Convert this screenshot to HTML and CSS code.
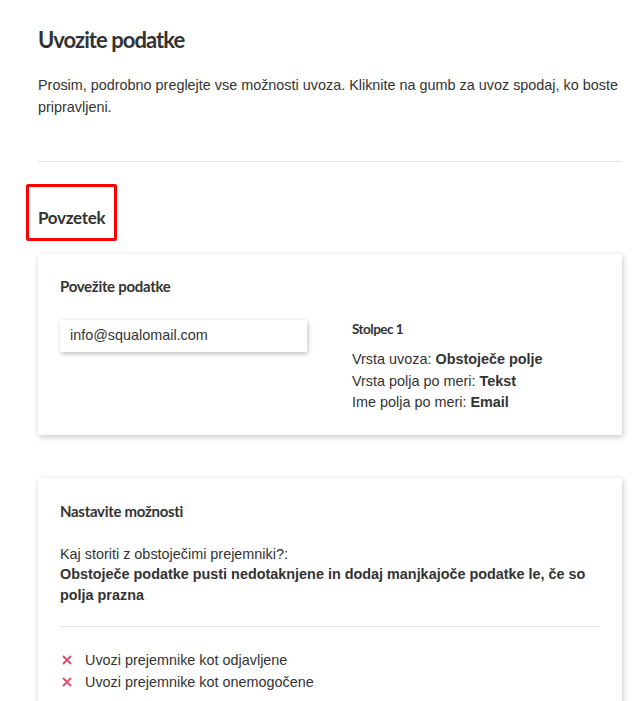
FILE: index.html
```html
<!DOCTYPE html>
<html lang="sl">

<head>
  <meta charset="UTF-8" />
  <meta name="viewport" content="width=device-width, initial-scale=1.0" />
  <title>Uvozite podatke</title>
  <link rel="stylesheet" href="styles.css">
</head>

<body>
  <div class="page">
    <h1 class="title">Uvozite podatke</h1>
    <p class="intro">Prosim, podrobno preglejte vse možnosti uvoza. Kliknite na gumb za uvoz spodaj, ko boste pripravljeni.</p>
    <hr class="divider">

    <div class="summary-head">
      <h2 class="subtitle">Povzetek</h2>
      <span class="highlight"></span>
    </div>

    <div class="card">
      <h3 class="card-title">Povežite podatke</h3>
      <div class="map-row">
        <div class="field">info@squalomail.com</div>
        <div class="column-info">
          <h4 class="column-title">Stolpec 1</h4>
          <div>Vrsta uvoza: <b>Obstoječe polje</b></div>
          <div>Vrsta polja po meri: <b>Tekst</b></div>
          <div>Ime polja po meri: <b>Email</b></div>
        </div>
      </div>
    </div>

    <div class="card card-options">
      <h3 class="card-title">Nastavite možnosti</h3>
      <div class="question">Kaj storiti z obstoječimi prejemniki?:</div>
      <div class="answer">Obstoječe podatke pusti nedotaknjene in dodaj manjkajoče podatke le, če so polja prazna</div>
      <hr class="card-divider">
      <ul class="options">
        <li>
          <svg class="cross" viewBox="0 0 10 10" width="10" height="10"><path d="M1 1L9 9M9 1L1 9" /></svg>
          Uvozi prejemnike kot odjavljene
        </li>
        <li>
          <svg class="cross" viewBox="0 0 10 10" width="10" height="10"><path d="M1 1L9 9M9 1L1 9" /></svg>
          Uvozi prejemnike kot onemogočene
        </li>
      </ul>
    </div>
  </div>
</body>

</html>
```

FILE: styles.css
```css
body {
  margin: 0;
  font-family: "Liberation Sans", Arial, sans-serif;
  font-size: 14.4px;
  color: #333;
  background: #fff;
}

.page {
  padding: 26px 22px 40px 38px;
}

.title,
.subtitle,
.card-title,
.column-title {
  font-family: "Lato", "Open Sans", sans-serif;
  font-weight: 700;
  color: #333;
  margin: 0;
  letter-spacing: -0.3px;
}

.title {
  font-size: 22px;
  line-height: 28px;
  letter-spacing: -0.95px;
}

.intro {
  margin: 20px 0 0;
  line-height: 22px;
}

.divider {
  border: none;
  border-top: 1px solid #e5e5e5;
  margin: 43px 0 0;
}

.summary-head {
  position: relative;
  margin-top: 44px;
}

.subtitle {
  font-size: 17px;
  line-height: 24px;
}

.highlight {
  position: absolute;
  left: -12px;
  top: -22px;
  width: 85px;
  height: 51px;
  border: 3px solid #f00;
  border-radius: 2px;
}

.card {
  margin-top: 24px;
  background: #fff;
  padding: 22px 22px 21px;
  box-shadow: 1px 2px 6px rgba(0, 0, 0, 0.22);
}

.card-title {
  font-size: 15px;
  line-height: 20px;
}

.map-row {
  display: flex;
  margin-top: 24px;
}

.field {
  width: 237px;
  height: 32px;
  line-height: 30px;
  padding: 0 0 0 10px;
  box-shadow: 1px 2px 5px rgba(0, 0, 0, 0.25);
  flex-shrink: 0;
}

.column-info {
  margin-left: 45px;
  line-height: 21.5px;
}

.column-title {
  font-size: 13.5px;
  line-height: 18px;
  margin-bottom: 11px;
  letter-spacing: -0.5px;
}

.card-options {
  margin-top: 43px;
  padding-top: 23px;
}

.question {
  margin-top: 23px;
  line-height: 20px;
}

.answer {
  font-weight: 700;
  line-height: 21px;
  padding-right: 10px;
}

.card-divider {
  border: none;
  border-top: 1px solid #e5e5e5;
  margin: 20px 0 0;
}

.options {
  list-style: none;
  margin: 22px 0 0;
  padding: 0;
  line-height: 22px;
}

.options li {
  display: flex;
  align-items: center;
}

.cross {
  margin: 0 13px 0 2px;
  stroke: #e0486e;
  stroke-width: 1.8;
  fill: none;
  flex-shrink: 0;
}
```
